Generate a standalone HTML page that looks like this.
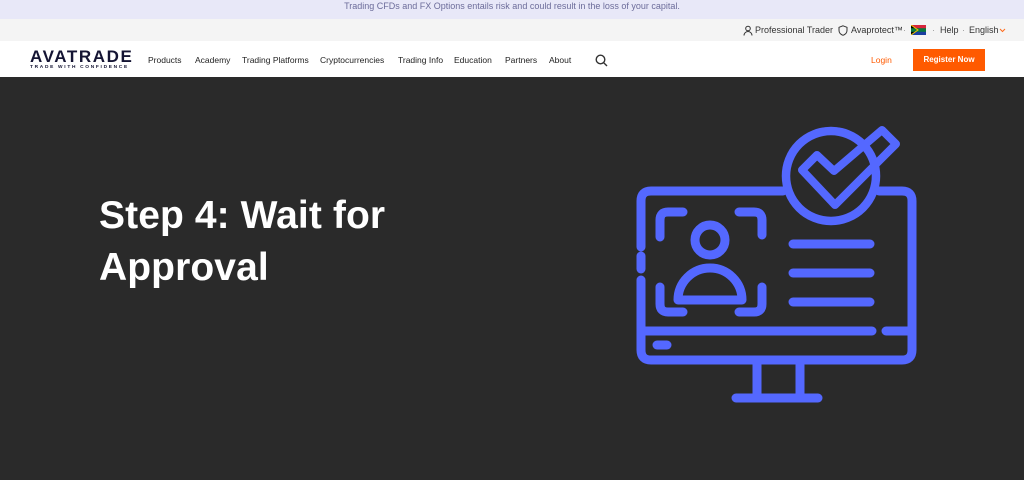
<!DOCTYPE html>
<html><head><meta charset="utf-8"><style>
*{margin:0;padding:0;box-sizing:border-box}
body{width:1024px;height:480px;overflow:hidden;font-family:"Liberation Sans",sans-serif;background:#2a2a2a;position:relative}
.risk{position:absolute;top:0;left:0;width:1024px;height:19px;background:#e8e8f8;color:#6c6c9a;font-size:9px;line-height:13px;text-align:center}
.util{position:absolute;top:19px;left:0;width:1024px;height:22px;background:#f4f4f4;font-size:9px;color:#333}
.util span{position:absolute;top:6px}
.nav{position:absolute;top:41px;left:0;width:1024px;height:36px;background:#fff}
.nav .m{position:absolute;top:14px;font-size:8.5px;color:#222}
.logo{position:absolute;left:30px;top:8px}
.reg{position:absolute;left:913px;top:8px;width:72px;height:22px;background:#ff5a00;color:#fff;font-size:8px;font-weight:bold;text-align:center;line-height:22px}
h1{position:absolute;left:99px;top:190px;color:#fff;font-size:39px;font-weight:bold;line-height:52px;letter-spacing:.1px}
</style></head><body>
<div class="risk">Trading CFDs and FX Options entails risk and could result in the loss of your capital.</div>
<div class="util">
<svg style="position:absolute;left:743px;top:6px" width="10" height="11" viewBox="0 0 10 11" fill="none" stroke="#333" stroke-width="1"><circle cx="5" cy="3.5" r="2.3"/><path d="M1 10.5a4 4 0 0 1 8 0"/></svg>
<span style="left:755px">Professional Trader</span>
<svg style="position:absolute;left:838px;top:6px" width="10" height="11" viewBox="0 0 10 11" fill="none" stroke="#333" stroke-width="1"><path d="M5 .8 9 2.3v3c0 2.6-1.8 4.3-4 5-2.2-.7-4-2.4-4-5v-3z"/></svg>
<span style="left:851px">Avaprotect™</span>
<span style="left:903px;color:#999">·</span>
<svg style="position:absolute;left:911px;top:6px" width="15" height="10" viewBox="0 0 15 10"><rect width="15" height="10" fill="#1b3fa0"/><rect width="15" height="4" fill="#d7263d"/><path d="M0 0 7 5 0 10Z" fill="#000"/><path d="M0 3.2H15V6.8H0Z" fill="#0a7a3e"/><path d="M0 0 7 5 0 10" fill="none" stroke="#f2c500" stroke-width="1"/></svg>
<span style="left:932px;color:#999">·</span>
<span style="left:940px">Help</span>
<span style="left:962px;color:#999">·</span>
<span style="left:969px">English</span>
<svg style="position:absolute;left:999px;top:9px" width="7" height="5" viewBox="0 0 7 5" fill="none" stroke="#ff6a1a" stroke-width="1"><path d="M1 1l2.5 2.5L6 1"/></svg>
</div>
<div class="nav">
<div class="logo"><div style="font-size:17px;font-weight:900;color:#141433;letter-spacing:1.6px;line-height:16px">AVATRADE</div><div style="font-size:4.8px;font-weight:bold;letter-spacing:1.7px;color:#141433">TRADE WITH CONFIDENCE</div></div>
<span class="m" style="left:148px">Products</span>
<span class="m" style="left:195px">Academy</span>
<span class="m" style="left:242px">Trading Platforms</span>
<span class="m" style="left:320px">Cryptocurrencies</span>
<span class="m" style="left:398px">Trading Info</span>
<span class="m" style="left:454px">Education</span>
<span class="m" style="left:505px">Partners</span>
<span class="m" style="left:549px">About</span>
<svg style="position:absolute;left:595px;top:13px" width="13" height="13" viewBox="0 0 13 13" fill="none" stroke="#333" stroke-width="1.4"><circle cx="5.5" cy="5.5" r="4.3"/><path d="M8.6 8.6 12 12"/></svg>
<span class="m" style="left:871px;color:#ff5a00">Login</span>
<div class="reg">Register Now</div>
</div>
<h1>Step 4: Wait for<br>Approval</h1>
<svg style="position:absolute;left:0;top:0" width="1024" height="480" viewBox="0 0 1024 480" fill="none" stroke="#5468ff" stroke-width="9" stroke-linecap="round" stroke-linejoin="round">
<path d="M641 247V201q0-10 10-10H783"/>
<path d="M879 191H902q10 0 10 10V350q0 10-10 10H651q-10 0-10-10V280"/>
<path d="M641 256V269"/>
<path d="M641 331H872M886 331H912"/>
<path d="M657 345H667"/>
<path d="M757 365V398M800 365V398M736 398H818"/>
<circle cx="831" cy="176" r="45" stroke-width="8.5"/>
<path stroke-width="8" d="M802 170 817 155 834 171 882 130 896 144 835 205Z"/>
<path d="M660 237V220q0-8 8-8H683M739 212H754q8 0 8 8V235M660 287V304q0 8 8 8H683M739 312H754q8 0 8-8V287"/>
<circle cx="710" cy="240" r="15"/>
<path d="M678 300a32 32 0 0 1 64 0Z"/>
<path d="M793 244H870M793 273H870M793 302H870"/>
</svg>
</body></html>
